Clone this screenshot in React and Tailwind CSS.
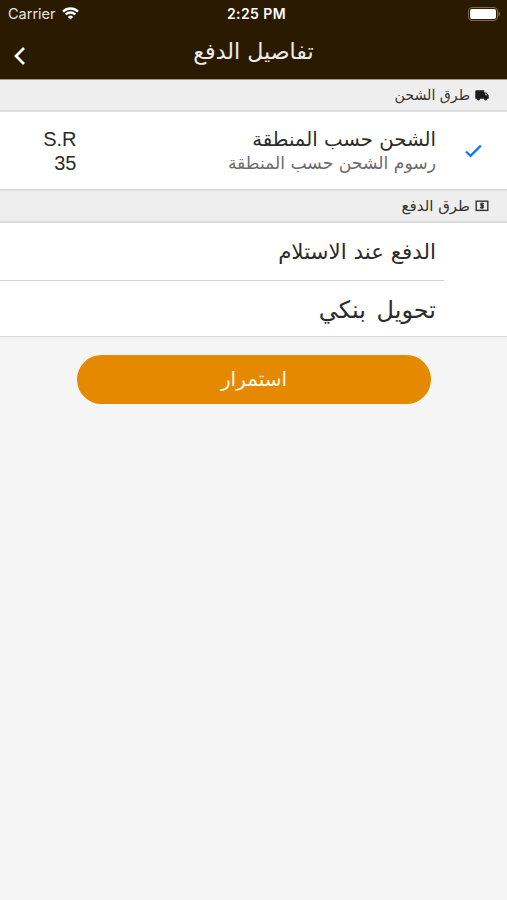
const PAYMENT_METHODS = [
  { name: "الدفع عند الاستلام", className: "h-[58px] border-b border-[#d2d2d2] pt-0.5 text-[21.4px]" },
  { name: "تحويل بنكي", className: "h-[55px] pt-0.5 text-[24px] [word-spacing:3px]" },
];

function StatusBar() {
  return (
    <div className="relative flex h-[27px] items-center justify-between pl-2 pr-[7px] font-['Inter',sans-serif]">
      <div className="flex items-center gap-1.5 text-[14.5px] text-[#e9e5df]">
        <span>Carrier</span>
        <svg width="17" height="13" viewBox="0 0 17 13" fill="none" stroke="white" strokeWidth="2.4">
          <path d="M1 4.6a10.6 10.6 0 0 1 15 0M3.7 7.5a6.8 6.8 0 0 1 9.6 0" />
          <path d="M8.5 12.6 5.9 9.9a3.7 3.7 0 0 1 5.2 0z" fill="white" stroke="none" />
        </svg>
      </div>
      <span className="absolute left-[227px] text-[14px] font-semibold tracking-[0.4px]">2:25 PM</span>
      <svg width="32" height="14" viewBox="0 0 32 14" fill="none">
        <rect x="0.5" y="0.5" width="29" height="13" rx="3.5" stroke="#7a6c58" />
        <rect x="2" y="2" width="26" height="10" rx="2" fill="white" />
        <path d="M30.5 4.5c2 1 2 4 0 5z" fill="#7a6c58" />
      </svg>
    </div>
  );
}

function TruckIcon() {
  return (
    <svg width="14" height="11" viewBox="0 0 14 11" fill="#1c1c1c">
      <path d="M1.3.3h7.9v2.2h2.3L13.7 5.4v3.4H.3V1.3a1 1 0 0 1 1-1z" />
      <circle cx="3.4" cy="8.8" r="1.7" />
      <circle cx="10.7" cy="8.8" r="1.7" />
      <path d="M10.1 3.5h1.1l1.3 1.8h-2.4z" fill="#bdbdbd" />
    </svg>
  );
}

function CashIcon() {
  return (
    <svg width="14" height="12" viewBox="0 0 14 12" fill="none" stroke="#333">
      <rect x="1.2" y="1.2" width="11.6" height="9.2" strokeWidth="1.4" />
      <path d="M9 3.6H6v2h2.2v2H5M7 2.4v6.8" strokeWidth="1.3" />
    </svg>
  );
}

function SectionHeader({ icon, children, className }) {
  return (
    <div className={`flex items-center gap-[5px] bg-[#eeeeee] pr-[18px] text-[#333] ${className}`}>
      {icon}
      <span>{children}</span>
    </div>
  );
}

export default function App() {
  return (
    <div
      dir="rtl"
      className="min-h-[900px] w-[507px] bg-[#f5f5f5] font-['DejaVu_Sans',sans-serif] text-[#2b2b2b]"
    >
      <header dir="ltr" className="h-[79px] bg-[#2b1a02] text-white">
        <StatusBar />
        <div className="flex h-[52px] items-center px-3">
          <svg className="mt-1.5 w-4" height="18" viewBox="0 0 16 18" fill="none" stroke="white" strokeWidth="2.7">
            <path d="M12 1 4 9l8 8" />
          </svg>
          <h1 className="flex-1 pr-4 pb-0.5 text-center text-[22.2px] text-[#eeebe6]">تفاصيل الدفع</h1>
        </div>
      </header>

      <SectionHeader
        className="h-[33px] border-t border-b-2 border-t-[#a5997f] border-b-[#dedede] pt-px text-[14.2px]"
        icon={<TruckIcon />}
      >
        طرق الشحن
      </SectionHeader>

      <div className="flex h-[77px] items-center bg-white pr-[25px]">
        <svg width="17" height="14" viewBox="0 0 17 14" fill="none" stroke="#087af0" strokeWidth="2.2">
          <path d="m1 7.5 4.5 4.4L15.8 1.6" />
        </svg>
        <div className="flex-1 pr-[29px]">
          <p className="text-[19.7px] leading-6">الشحن حسب المنطقة</p>
          <p className="text-[17.2px] leading-[22px] text-[#6c6c6c]">رسوم الشحن حسب المنطقة</p>
        </div>
        <div
          dir="ltr"
          className="mt-0.5 w-[76.5px] text-right font-['Liberation_Sans',sans-serif] text-[20px] leading-[23.5px]"
        >
          <p>S.R</p>
          <p>35</p>
        </div>
      </div>

      <SectionHeader className="h-[34px] border-t-2 border-b-2 border-[#dcdcdc] text-[15px]" icon={<CashIcon />}>
        طرق الدفع
      </SectionHeader>

      <div className="border-b border-[#d8d8d8] bg-white">
        {PAYMENT_METHODS.map(({ name, className }) => (
          <div key={name} className={`mr-[63px] flex items-center pr-2 ${className}`}>
            {name}
          </div>
        ))}
      </div>

      <button
        type="button"
        className="mt-[18px] mr-[76px] flex h-[49px] w-[354px] items-center justify-center rounded-full bg-[#e58a00] pb-0.5 text-[20px] text-[#fff8e8]"
      >
        استمرار
      </button>
    </div>
  );
}
